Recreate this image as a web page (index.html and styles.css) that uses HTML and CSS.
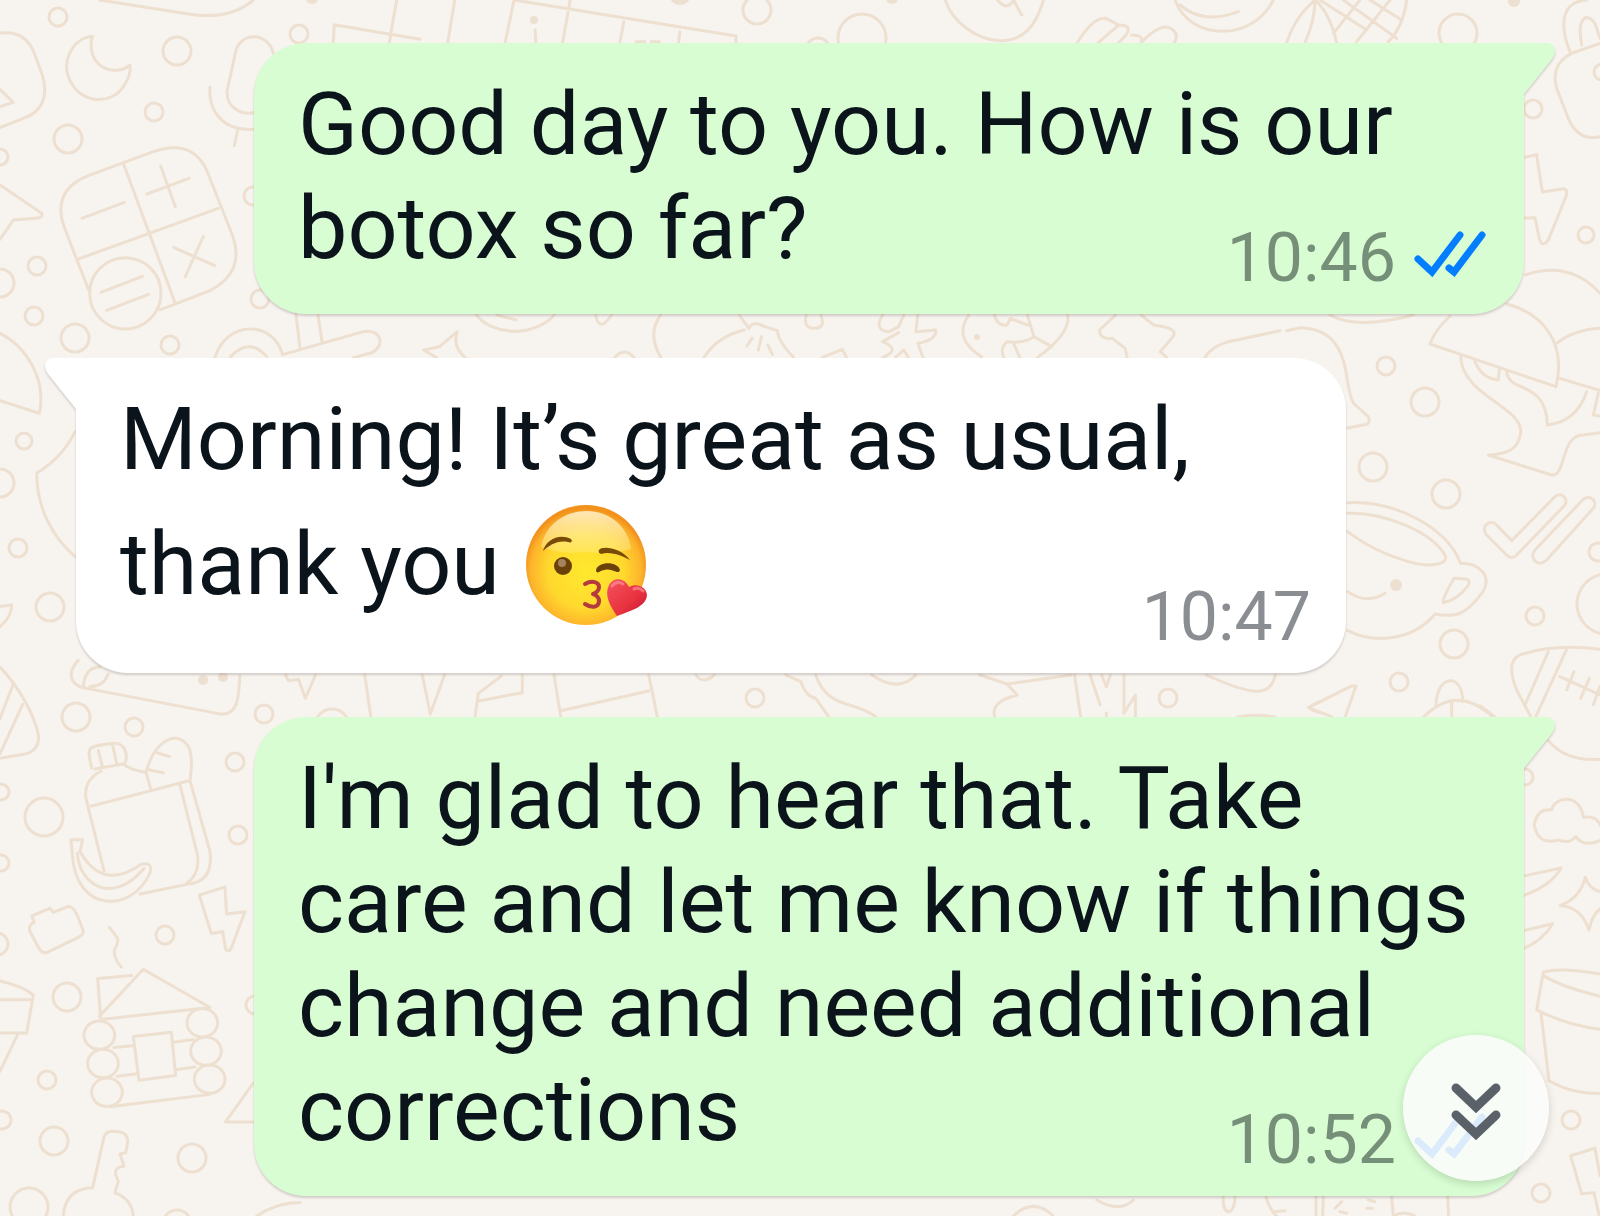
FILE: index.html
```
<!DOCTYPE html>
<html lang="en">
<head>
  <meta charset="UTF-8">
  <meta name="viewport" content="width=device-width, initial-scale=1.0">
  <title>Chat</title>
  <link rel="stylesheet" href="styles.css">
</head>
<body>
  <!-- Wallpaper doodles -->
  <svg class="wallpaper" viewBox="0 0 1600 1216" preserveAspectRatio="xMidYMid slice" aria-hidden="true">
    <!-- bubbles between the doodles -->
    <g>
      <circle cx="58" cy="17" r="9"/><circle cx="177" cy="51" r="14"/><circle cx="299" cy="34" r="9"/>
      <circle cx="154" cy="112" r="9"/><circle cx="68" cy="139" r="14"/><circle cx="0" cy="157" r="8"/>
      <circle cx="37" cy="266" r="9"/><circle cx="0" cy="283" r="14"/><circle cx="34" cy="316" r="9"/>
      <circle cx="75" cy="338" r="14"/><circle cx="170" cy="345" r="9"/><circle cx="253" cy="196" r="9"/>
      <circle cx="260" cy="299" r="9"/><circle cx="1458" cy="33" r="19"/><circle cx="1533" cy="109" r="9"/>
      <circle cx="1586" cy="235" r="8"/><circle cx="1602" cy="72" r="8"/><circle cx="24" cy="441" r="8"/>
      <circle cx="0" cy="483" r="14"/><circle cx="18" cy="548" r="9"/><circle cx="50" cy="607" r="14"/>
      <circle cx="1386" cy="366" r="9"/><circle cx="1425" cy="402" r="14"/><circle cx="1373" cy="467" r="14"/>
      <circle cx="1446" cy="494" r="14"/><circle cx="1535" cy="616" r="9"/><circle cx="1454" cy="644" r="14"/>
      <circle cx="1399" cy="682" r="9"/><circle cx="1598" cy="552" r="9"/><circle cx="1607" cy="604" r="30"/>
      <circle cx="76" cy="717" r="14"/><circle cx="134" cy="727" r="9"/><circle cx="264" cy="714" r="9"/>
      <circle cx="235" cy="762" r="9"/><circle cx="44" cy="817" r="19"/><circle cx="1" cy="792" r="8"/>
      <circle cx="1" cy="863" r="8"/><circle cx="238" cy="835" r="9"/><circle cx="165" cy="935" r="9"/>
      <circle cx="-3" cy="944" r="11"/><circle cx="67" cy="997" r="14"/><circle cx="255" cy="1005" r="9"/>
      <circle cx="47" cy="1080" r="9"/><circle cx="2" cy="1120" r="9"/><circle cx="54" cy="1141" r="14"/>
      <circle cx="192" cy="1158" r="14"/><circle cx="29" cy="1207" r="19"/><circle cx="177" cy="1224" r="14"/>
      <circle cx="1571" cy="1120" r="9"/><circle cx="1541" cy="1193" r="9"/><circle cx="1525" cy="777" r="8"/>
      <circle cx="755" cy="698" r="9"/><circle cx="1168" cy="698" r="9"/><circle cx="332" cy="726" r="17"/>
      <circle cx="757" cy="10" r="14"/><circle cx="862" cy="38" r="24"/><circle cx="818" cy="50" r="12"/>
    </g>
    <g class="dots">
      <circle cx="1396" cy="585" r="6"/><circle cx="203" cy="680" r="5"/><circle cx="223" cy="677" r="5"/>
      <circle cx="534" cy="20" r="4"/><circle cx="312" cy="-2" r="6"/><circle cx="680" cy="-6" r="11"/>
      <circle cx="892" cy="-2" r="6"/><circle cx="1514" cy="1" r="6"/><circle cx="977" cy="337" r="3"/>
    </g>

    <!-- moon, microphone, calculator -->
    <g transform="scale(.3333)">
      <path d="M300 0 570 43Q690 60 760 0"/>
      <path d="M0 99C60 92 90 120 105 165L127 225C145 285 130 335 70 355L0 383M0 268 40 307 0 320"/>
      <path d="M278 109C215 115 180 190 212 245 245 312 335 315 370 260Q395 225 390 196C350 225 295 210 278 165Q268 135 278 109Z"/>
      <path d="M707 155C720 95 805 95 820 160M707 155 682 270C675 320 725 350 770 336M630 262C625 330 665 395 765 388M713 390 703 437"/>
      <path d="M265 527 460 455Q575 415 620 510L695 700Q740 815 630 872L480 930M265 527Q155 570 192 680L266 870M370 490 525 908M238 776 655 625"/>
      <circle cx="376" cy="880" r="107"/>
      <path d="M246 655 373 607M482 498 526 620M441 582 567 535M522 743 644 797M610 709 556 830M303 877 427 829M320 931 446 883"/>
      <path d="M0 555 125 640Q130 655 105 655L40 660 0 718"/>
      <path d="M645 1072C680 960 820 960 848 1064L1090 995C1150 985 1155 1045 1110 1060L1060 1073M692 1070Q748 1010 800 1070M888 940 900 1046M954 945 967 1030"/>
      <path d="M0 1000C80 1040 140 1140 118 1240L0 1202M225 1295Q190 1370 110 1420C110 1520 155 1610 225 1670M0 1820 35 1815Q35 1850 0 1880"/>
      <path d="M1000 125 1003 74 1260 118M1168 128 1190 0"/>
    </g>

    <!-- strip along the top edge -->
    <g transform="scale(.6378 .3333) translate(314 0)">
      <path d="M388 128 399 0M478 128 492 0M492 0 840 108V128M568 128 580 0M658 128 664 65M750 128 752 95M525 90 526 128M683 125H697M707 125H720"/>
      <path d="M1168 0C1180 70 1220 122 1255 122S1310 80 1322 0M1250 0Q1265 35 1275 0L1288 45M1375 128Q1400 50 1420 55L1440 75 1408 128M1440 75Q1470 75 1440 128M1460 105Q1480 105 1475 128 1510 60 1525 90 1535 105 1527 128"/>
    </g>

    <!-- watch, corn, backpack, lightning -->
    <g transform="translate(1180 0) scale(.3333)">
      <path d="M-15 0C30 125 220 125 280 0M0 15Q70 75 175 35M320 128Q345 50 405 0 405 60 375 128M405 0Q450 40 470 128M420 0 560 90M490 0 650 115M570 0 665 60M540 0 460 100M630 0 530 125M680 0Q670 80 625 125"/>
      <path d="M1170 155C1140 80 1140 5 1220 0M1205 135C1190 50 1220 35 1245 70L1260 115M1260 130 1180 158Q1110 190 1130 265L1165 355Q1195 425 1260 410"/>
      <path d="M1035 472 1070 464 1087 576 1150 566Q1165 566 1158 590L1105 720Q1085 745 1078 715L1065 653 1035 654"/>
      <path d="M1035 825Q1170 780 1260 880M450 945Q530 990 700 945"/>
    </g>

    <!-- strip between the first two messages -->
    <g transform="translate(280 300) scale(.6378 .3333)">
      <path d="M308 45C335 110 400 110 430 45M340 45 370 60M495 45Q500 100 520 45M225 150 250 140 278 95Q270 140 290 172M225 150 245 172M525 172Q540 140 555 172M597 45Q575 100 597 172M665 172Q685 110 728 90M720 45 735 85Q742 60 760 80L780 92Q780 120 805 172M740 115 732 138M755 110 750 150M765 135 772 163M825 45Q820 85 838 85T848 45M850 172 882 148 888 172"/>
      <path d="M945 45Q930 90 955 95L970 80 978 45M1000 45 997 95 1028 90Q1030 120 1000 130L1008 172M970 98 945 125Q975 150 945 172M965 172 978 150 985 172M1080 45C1060 100 1075 140 1100 170M1120 45Q1125 80 1140 75L1145 55 1172 75M1172 45 1182 110 1210 140M1235 45Q1240 100 1188 172M1182 110Q1170 130 1140 125 1128 145 1135 172M1150 130 1160 172M1310 45 1285 90Q1285 120 1305 115L1325 145 1328 172M1350 45 1370 75Q1410 85 1400 110L1380 155 1390 172M1450 172Q1465 130 1500 120L1568 92"/>
    </g>

    <!-- helmet, bird, teacup, ticks, football -->
    <g transform="translate(1300 300) scale(.3333)">
      <path d="M-40 92 0 83C90 85 125 140 138 215Q150 300 163 312L205 350Q215 372 190 375L143 384"/>
      <path d="M450 48Q405 90 390 132L768 260C800 130 730 40 620 12M770 130Q820 90 900 85M780 235 900 272"/>
      <path d="M482 172C490 290 670 320 662 400 655 450 620 462 565 465L755 525C800 530 780 405 850 405L900 398M525 185Q545 235 595 240L598 210M620 215C625 280 740 240 742 375Q830 365 860 275M895 280 880 345 900 348"/>
      <path d="M143 608C280 600 440 680 482 790 540 790 580 830 545 880 500 940 470 955 405 942 350 1010 240 1040 143 992M143 640C240 635 390 690 435 765 450 800 370 800 325 785Q220 755 143 695M143 875Q200 915 255 880M462 835 500 837Q515 845 500 862 470 900 430 908Q425 900 462 835Z"/>
      <path d="M590 675 635 722 765 590C785 575 805 595 795 615L650 765Q635 780 620 765L560 705C540 680 570 655 590 675ZM705 750 848 600C870 580 895 605 880 625L740 780C715 805 685 775 705 750Z"/>
      <path d="M900 1048C800 1035 720 1045 660 1065 625 1080 630 1120 650 1170L695 1255M745 1055 675 1215M800 1048 705 1255M780 1130 900 1185M822 1115 800 1170M868 1135 842 1195M900 1160 880 1215"/>
      <path d="M135 1252 168 1158 155 1158 25 1223 95 1250M408 1215C410 1120 490 1120 488 1205M370 1252Q470 1150 580 1252M455 1210V1252"/>
    </g>

    <!-- strip between the last two messages -->
    <g transform="translate(260 660) scale(.676 .3333)">
      <path d="M38 45 42 62 57 58 67 115 82 45M155 45 164 172M240 45 252 162 273 45M357 48 323 100 318 172M388 45V98L325 122M435 45 445 172M575 45 588 172M445 152 575 93M645 45Q655 75 672 45M778 45 800 65Q808 110 822 115L842 172M822 45C840 150 880 120 912 172M905 45Q945 100 970 45M1065 45 1105 72 1200 45M1105 72 1120 105Q1080 125 1087 172M1205 45 1214 172M1228 45 1243 135M1245 45 1252 80 1258 45M1278 45V160L1295 105V172M1252 158V172M1400 45C1470 110 1495 110 1502 45M1445 172Q1475 160 1502 172M1568 158Q1540 145 1568 125"/>
    </g>

    <!-- game pad, bottle, cabin, key -->
    <g transform="translate(0 660) scale(.3333 .3546)">
      <path d="M235 0C190 50 225 75 260 80L660 152C720 160 715 90 720 45M250 75Q255 20 300 20M325 40Q310 75 270 75"/>
      <path d="M0 20C60 80 100 150 115 210Q120 255 75 265L0 277M38 72 0 165M68 125 0 265"/>
      <path d="M275 305C260 240 260 245 340 235 385 230 385 290 370 293L285 307M295 255 307 300M338 240 350 292M303 313Q250 340 258 390L312 595M370 293Q390 310 438 317L452 363M274 412 570 340M438 317C470 210 545 200 568 250Q580 280 570 340L630 540Q640 620 575 630L420 660M540 352 590 540Q605 600 560 630M472 262 508 272M448 310 490 318"/>
      <path d="M213 507H248L240 540C290 625 360 620 425 575Q460 570 450 600C400 710 230 720 217 550ZM232 545C240 640 340 690 432 588"/>
      <path d="M95 722 150 700 160 712 205 695Q220 695 232 720L250 765Q250 775 235 782L140 825Q125 828 115 810L88 762Q88 745 103 740ZM328 753 353 785Q355 800 343 818 340 840 364 866M598 663 675 640 680 716 735 710 693 815Q685 825 677 815L668 766 634 771Z"/>
      <path d="M302 1010 293 898 395 890M298 1005 430 872 630 980 308 1013M400 1062 514 1050 527 1172 417 1185ZM342 1093 404 1087M352 1174 412 1167M520 1078 580 1070M530 1155 585 1148M330 1260 630 1225"/>
      <ellipse cx="298" cy="1058" rx="46" ry="40"/><ellipse cx="309" cy="1138" rx="46" ry="40"/><ellipse cx="321" cy="1219" rx="46" ry="40"/>
      <ellipse cx="607" cy="1023" rx="46" ry="40"/><ellipse cx="618" cy="1103" rx="46" ry="40"/><ellipse cx="629" cy="1182" rx="46" ry="40"/>
      <path d="M0 905Q70 920 100 945L80 1052H0M0 958H95M55 1052 0 1160M760 1193 676 1303H760"/>
      <path d="M190 1568Q195 1490 278 1488L312 1345Q320 1325 345 1330 385 1330 383 1360L377 1390 360 1393 372 1428Q340 1430 348 1455L355 1470 345 1503Q395 1520 400 1568M770 1568Q830 1530 900 1530"/>
    </g>

    <!-- cloud, star, flower pot -->
    <g transform="translate(1480 680) scale(.3333 .3418)">
      <path d="M0 75 45 108M205 178Q260 240 360 232"/>
      <path d="M215 380C225 340 300 330 310 402Q350 395 360 425M360 470Q310 490 287 458 270 480 235 468 175 485 163 425 170 375 215 380"/>
      <path d="M133 573 243 550Q215 600 133 630M133 733 218 713Q190 760 133 785M360 620Q325 610 316 577 300 640 240 660 305 665 327 732 335 690 360 670"/>
      <path d="M360 860Q240 840 190 855L170 965Q260 1010 360 1022M190 865Q250 900 360 925M183 975 207 1172Q270 1210 360 1210M360 1450 345 1370 272 1392 305 1503 342 1500 358 1568"/>
    </g>

    <!-- strip along the bottom edge -->
    <g transform="translate(1180 1000) scale(.3333)">
      <path d="M130 590C125 650 165 650 165 590M258 592Q270 630 290 648M280 635 315 632M408 590V648M430 592 428 648M465 625 485 605M480 635 500 640M560 625H578M565 600 585 605M635 590 640 648Q670 630 705 648M803 590 806 648M-250 600Q-180 640-140 600M-500 648Q-440 590-380 648"/>
    </g>
  </svg>

  <main class="chat">
    <article class="bubble out">
      <svg class="tail" viewBox="0 0 34 56" aria-hidden="true"><path d="M0 0H25Q32 1 32 8 32 12 29 16L1 51V56H0Z"/></svg>
      <p class="text">Good day to you. How is our botox so far?</p>
      <div class="meta">
        <time datetime="10:46">10:46</time>
        <svg class="ticks" viewBox="0 0 72 46" role="img" aria-label="Read"><path d="M4 28 18 41 46 4M35 37 40 41 68 4"/></svg>
      </div>
    </article>

    <article class="bubble in">
      <svg class="tail" viewBox="0 0 34 56" aria-hidden="true"><path d="M34 0H9Q2 1 2 8 2 12 5 16L33 51V56H34Z"/></svg>
      <p class="text">Morning! It’s great as usual, thank you
        <svg class="emoji" viewBox="0 0 120 120" role="img" aria-label="Face blowing a kiss">
          <defs>
            <radialGradient id="face" cx=".5" cy=".55" r=".52">
              <stop offset="0" stop-color="#ffe92e"/>
              <stop offset=".6" stop-color="#ffd92e"/>
              <stop offset=".88" stop-color="#fdb52b"/>
              <stop offset="1" stop-color="#f2921d"/>
            </radialGradient>
            <linearGradient id="shine" x1="0" y1="0" x2="0" y2="1">
              <stop offset="0" stop-color="#fff3cf" stop-opacity=".85"/>
              <stop offset="1" stop-color="#fff099" stop-opacity=".35"/>
            </linearGradient>
            <linearGradient id="heart" x1="0" y1="0" x2="1" y2="1">
              <stop offset="0" stop-color="#f5525e"/>
              <stop offset=".6" stop-color="#e8323f"/>
              <stop offset="1" stop-color="#bf1230"/>
            </linearGradient>
          </defs>
          <circle cx="60" cy="60" r="60" fill="url(#face)"/>
          <path d="M15 42C20 18 40 6 61 6S102 20 105 44Q82 50 60 47 36 50 15 42Z" fill="url(#shine)"/>
          <path d="M17 46C20 34 34 28 45 34 47 37 45 38 42 37 31 35 24 40 17 46ZM73 45C76 40 96 43 104 55 96 51 85 46 75 49 73 48 72 47 73 45Z" fill="#7a4a08"/>
          <ellipse cx="37" cy="61" rx="9" ry="9" fill="#6a4108"/>
          <ellipse cx="36" cy="58" rx="4" ry="4" fill="#a5845c"/>
          <path d="M70 65C72 56 92 56 94 65 93 68 91 67 88 66 84 64 80 64 75 66 72 68 70 68 70 65Z" fill="#6a4108"/>
          <path d="M59 79C66 75 73 77 73 82S67 89 67 89 74 91 73 97 65 103 59 99" fill="none" stroke="#b53a3c" stroke-width="4" stroke-linecap="round" stroke-linejoin="round"/>
          <path d="M91 111C84 101 78 90 83 80 88 71 99 73 103 82 110 78 120 81 121 90 120 102 104 106 91 111Z" fill="url(#heart)"/>
          <path d="M86 81Q91 75 97 79M108 84Q113 82 117 86" fill="none" stroke="#ff9aa0" stroke-width="3" stroke-linecap="round" opacity=".6"/>
        </svg>
      </p>
      <div class="meta">
        <time datetime="10:47">10:47</time>
      </div>
    </article>

    <article class="bubble out">
      <svg class="tail" viewBox="0 0 34 56" aria-hidden="true"><path d="M0 0H25Q32 1 32 8 32 12 29 16L1 51V56H0Z"/></svg>
      <p class="text">I'm glad to hear that. Take care and let me know if things change and need additional corrections</p>
      <div class="meta">
        <time datetime="10:52">10:52</time>
        <svg class="ticks" viewBox="0 0 72 46" role="img" aria-label="Read"><path d="M4 28 18 41 46 4M35 37 40 41 68 4"/></svg>
      </div>
    </article>
  </main>

  <button class="scroll-down" type="button" aria-label="Scroll to bottom">
    <svg viewBox="0 0 50 58" aria-hidden="true"><path d="M5 6 25 25 45 6M5 33 25 52 45 33"/></svg>
  </button>
</body>
</html>
```
FILE: styles.css
```
* {
  box-sizing: border-box;
}

body {
  margin: 0;
  min-height: 100vh;
  overflow: hidden;
  background-color: #f7f3ee;
  color: #0b141b;
  font-family: Roboto, Arial, sans-serif;
}

.wallpaper {
  position: fixed;
  inset: 0;
  width: 100%;
  height: 100%;
  fill: none;
  stroke: #eee0d0;
  stroke-width: 3px;
  stroke-linecap: round;
  stroke-linejoin: round;
}

.wallpaper path,
.wallpaper circle,
.wallpaper ellipse {
  vector-effect: non-scaling-stroke;
}

.wallpaper .dots {
  fill: #eee0d0;
  stroke: none;
}

.chat {
  position: relative;
  display: flex;
  flex-direction: column;
  gap: 44px;
  padding: 43px 76px 19px;
}

/* the time shares the cell of the text and sits in its last line */
.bubble {
  position: relative;
  display: grid;
  padding: 29px 38px 16px 44px;
  border-radius: 52px;
  filter: drop-shadow(0 2px 1px rgba(60, 50, 50, 0.2));
}

.out {
  margin-left: 178px;
  border-top-right-radius: 0;
  background-color: #d8fdd2;
}

.in {
  margin-right: 178px;
  padding-right: 35px;
  border-top-left-radius: 0;
  background-color: #fff;
}

.tail {
  position: absolute;
  top: 0;
  width: 34px;
  height: 56px;
}

.out .tail {
  left: 100%;
  margin-left: -1px;
  fill: #d8fdd2;
}

.in .tail {
  right: 100%;
  margin-right: -1px;
  fill: #fff;
}

.text {
  grid-area: 1 / 1;
  margin: 0;
  padding: 0 16px 18px 0;
  font-size: 88px;
  line-height: 104px;
}

.emoji {
  width: 120px;
  height: 120px;
  margin: 14px 4px;
  vertical-align: -45px;
  overflow: visible;
}

.meta {
  grid-area: 1 / 1;
  place-self: end;
  display: flex;
  align-items: flex-start;
  gap: 18px;
  color: #768f79;
  font-size: 68px;
  line-height: 80px;
}

.in .meta {
  color: #8a8e92;
}

.ticks {
  width: 72px;
  height: 46px;
  margin-top: 13px;
  fill: none;
  stroke: #027eff;
  stroke-width: 7px;
  stroke-linecap: round;
  stroke-linejoin: miter;
}

.scroll-down {
  position: fixed;
  right: 51px;
  bottom: 35px;
  display: flex;
  align-items: center;
  justify-content: center;
  width: 146px;
  height: 146px;
  padding: 0;
  border: none;
  border-radius: 50%;
  background-color: rgba(251, 252, 252, 0.87);
  box-shadow: 0 3px 8px rgba(0, 0, 0, 0.15);
  cursor: pointer;
}

.scroll-down svg {
  width: 50px;
  height: 58px;
  margin-top: 6px;
  fill: none;
  stroke: #5b6168;
  stroke-width: 9px;
  stroke-linecap: round;
}
```
